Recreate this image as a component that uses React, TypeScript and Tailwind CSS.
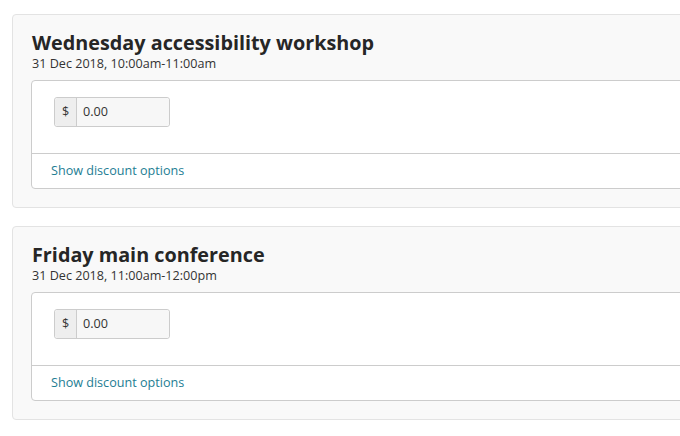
import React from 'react';

const events = [
  { title: 'Wednesday accessibility workshop', when: '31 Dec 2018, 10:00am-11:00am' },
  { title: 'Friday main conference', when: '31 Dec 2018, 11:00am-12:00pm' },
];

const EventCard: React.FC<{ title: string; when: string }> = ({ title, when }) => (
  <div className="w-[720px] rounded-[4px] border border-[#e3e3e3] bg-[#f9f9f9] px-[18px] pt-[15px] pb-[18px]">
    <h2 className="m-0 text-[19.8px] font-bold leading-[25px] text-[#262626] pl-px">{title}</h2>
    <p className="m-0 text-[12.6px] leading-[17px] text-[#333] pl-px">{when}</p>
    <div className="mt-[8px] rounded-[4px] border border-[#cccccc] bg-white">
      <div className="pt-[16px] pb-[26px] pl-[22px]">
        <div className="flex h-[30px] w-[116px] rounded-[3px] border border-[#cccccc] text-[12.6px] text-[#333]">
          <span className="flex w-[22px] items-center justify-center border-r border-[#cccccc] bg-[#eeeeee] rounded-l-[3px]">$</span>
          <span className="flex flex-1 items-center bg-[#f7f7f7] pl-[6px] rounded-r-[3px]">0.00</span>
        </div>
      </div>
      <div className="flex h-[35px] items-center border-t border-[#cccccc] pl-[19px]">
        <a className="text-[12.6px] text-[#237d93] no-underline" href="#">Show discount options</a>
      </div>
    </div>
  </div>
);

export default function App() {
  return (
    <div className="h-[436px] w-[680px] overflow-hidden bg-white pl-[12px] pt-[14px] font-['Open_Sans',sans-serif]">
      <div className="flex flex-col gap-[18px]">
        {events.map((e) => (
          <EventCard key={e.title} title={e.title} when={e.when} />
        ))}
      </div>
    </div>
  );
}
